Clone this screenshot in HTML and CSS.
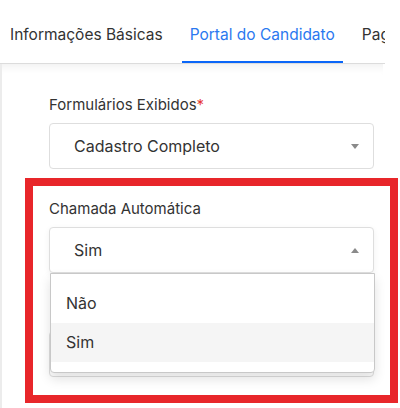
FILE: index.html
```html
<!DOCTYPE html>
<html lang="pt">
<head>
  <meta charset="UTF-8" />
  <title>Portal do Candidato</title>
  <link rel="stylesheet" href="styles.css">
</head>
<body>
  <nav class="tabs">
    <div class="tab">Informações Básicas</div>
    <div class="tab active">Portal do Candidato</div>
    <div class="tab">Pagamento</div>
  </nav>

  <div class="panel">
    <div class="field">
      <label>Formulários Exibidos<span class="req">*</span></label>
      <div class="select">
        <span>Cadastro Completo</span>
        <span class="caret"></span>
      </div>
    </div>

    <div class="field">
      <label>Chamada Automática</label>
      <div class="select open">
        <span>Sim</span>
        <span class="caret up"></span>
        <ul class="dropdown">
          <li>Não</li>
          <li class="hover">Sim</li>
        </ul>
      </div>
    </div>

    <!-- next field, hidden under the open dropdown -->
    <div class="field">
      <label class="blank"></label>
      <div class="select">
        <span></span>
        <span class="caret"></span>
      </div>
    </div>
  </div>

  <div class="highlight"></div>
</body>
</html>
```

FILE: styles.css
```css
body {
  margin: 0;
  background: #fff;
  font-family: Inter, "Noto Sans", sans-serif;
  color: #333;
  overflow: hidden;
}
.tabs {
  display: flex;
  gap: 11px;
  width: 385px;
  height: 64px;
  padding-left: 2px;
  box-sizing: border-box;
  border-bottom: 1px solid #dcdcdc;
  overflow: hidden;
  white-space: nowrap;
}
.tab {
  flex-shrink: 0;
  padding: 25px 8px 0;
  height: 64px;
  box-sizing: border-box;
  font-size: 15.5px;
  line-height: 20px;
  color: #333;
  border-bottom: 3px solid transparent;
}
.tab.active {
  color: #2a78f0;
  border-bottom-color: #0a66f8;
}
.panel {
  width: 383px;
  border-left: 2px solid #ececec;
  padding: 31px 0 0 47px;
  box-sizing: border-box;
  height: 344px;
  box-shadow: inset 0 10px 10px -8px rgba(0, 0, 0, 0.07);
}
.field {
  margin-bottom: 30px;
}
.field label {
  display: block;
  font-size: 15px;
  line-height: 20px;
  margin-bottom: 8px;
  color: #333;
}
.field label.blank {
  height: 20px;
}
.req {
  color: #e53935;
}
.select {
  position: relative;
  width: 325px;
  height: 46px;
  box-sizing: border-box;
  border: 1px solid #dedede;
  border-radius: 4px;
  display: flex;
  align-items: center;
  justify-content: space-between;
  padding: 0 14px 0 24px;
  font-size: 16px;
  color: #333;
  background: #fff;
}
.caret {
  width: 0;
  height: 0;
  border-left: 4px solid transparent;
  border-right: 4px solid transparent;
  border-top: 5px solid #8a8a8a;
}
.caret.up {
  border-top: none;
  border-bottom: 5px solid #8a8a8a;
}
.select.open {
  z-index: 2;
  box-shadow: 0 2px 6px rgba(0, 0, 0, 0.06);
}
.dropdown {
  position: absolute;
  top: 45px;
  left: 0;
  width: 323px;
  margin: 0;
  padding: 10px 0;
  list-style: none;
  background: #fff;
  border: 1px solid #c8c8c8;
  border-radius: 0 0 4px 4px;
  box-shadow: 0 6px 12px rgba(0, 0, 0, 0.12);
}
.dropdown li {
  height: 39px;
  line-height: 39px;
  padding-left: 15px;
  font-size: 16px;
  color: #333;
}
.dropdown li.hover {
  background: #f5f5f5;
}
.highlight {
  position: absolute;
  left: 25px;
  top: 178px;
  width: 373px;
  height: 225px;
  box-sizing: border-box;
  border: 8px solid #e8262a;
  z-index: 5;
}
```
